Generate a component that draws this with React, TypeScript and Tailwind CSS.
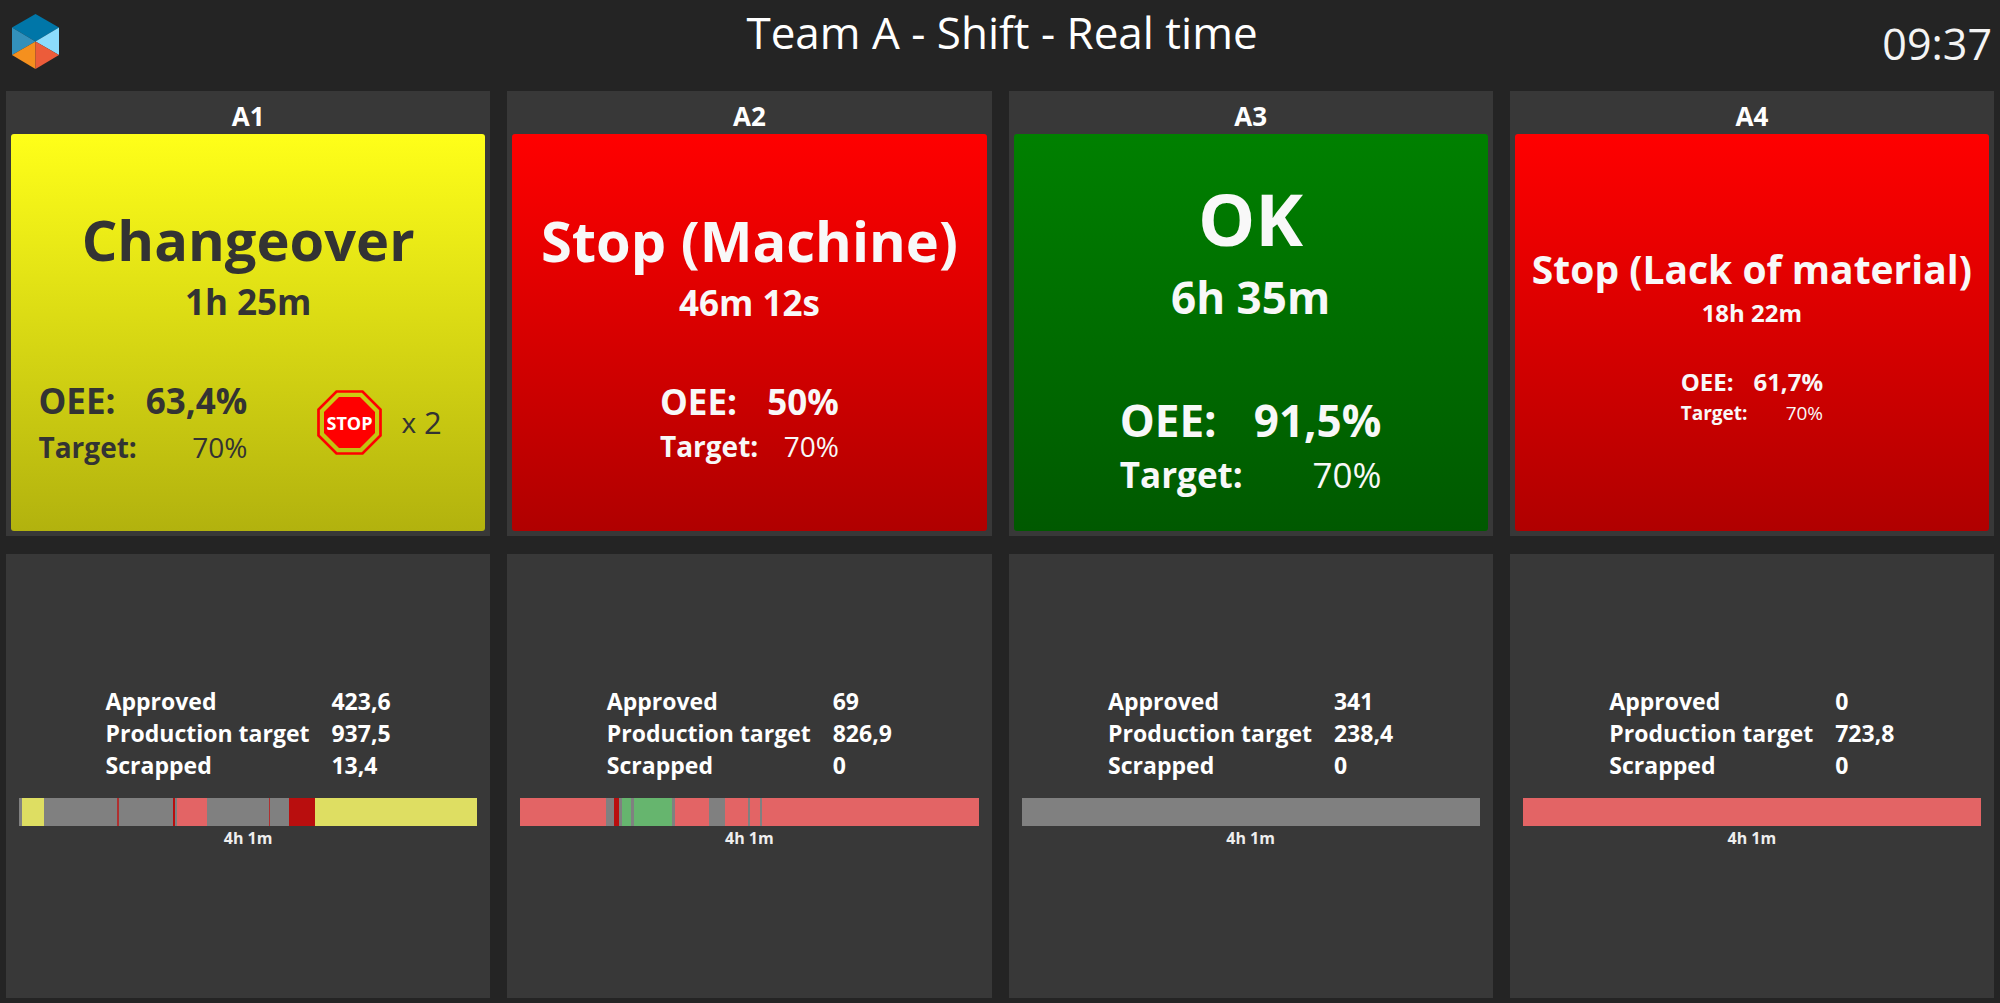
type TileSize = 'sm' | 'md' | 'lg';

type Segment = {
  kind: keyof typeof segmentColors;
  length: number;
};

type Machine = {
  name: string;
  status: string;
  duration: string;
  oee: string;
  target: string;
  stops?: number;
  size: TileSize;
  tileClassName: string;
  approved: string;
  productionTarget: string;
  scrapped: string;
  timeline: Segment[];
};

const segmentColors = {
  idle: 'bg-[#808080]',
  changeover: 'bg-[#dede62]',
  stop: 'bg-[#e36465]',
  shortStop: 'bg-[#b03030]',
  unknown: 'bg-[#b90e0e]',
  running: 'bg-[#66b56e]',
};

const sizeClasses = {
  sm: {
    status: 'text-[39px] leading-[54px]',
    duration: 'text-[24px] leading-[34px] mb-[35px]',
    grid: 'gap-x-[6px]',
    oee: 'text-[24px] leading-[34px]',
    target: 'text-[19px] leading-[28px]',
  },
  md: {
    status: 'text-[56px] leading-[76px]',
    duration: 'text-[35px] leading-[50px] mb-[50px]',
    grid: 'gap-x-[9px]',
    oee: 'text-[35px] leading-[48px]',
    target: 'text-[28px] leading-[40px]',
  },
  lg: {
    status: 'text-[72px] leading-[98px]',
    duration: 'text-[44px] leading-[60px] mb-[62px]',
    grid: 'gap-x-[11px]',
    oee: 'text-[44px] leading-[62px]',
    target: 'text-[35px] leading-[48px]',
  },
};

const yellowTile = 'from-[#ffff19] to-[#b2b20e] text-[#333333]';
const redTile = 'from-[#ff0000] to-[#b00000] text-[#f8f8f8]';
const greenTile = 'from-[#008000] to-[#005900] text-[#f8f8f8]';

const machines: Machine[] = [
  {
    name: 'A1',
    status: 'Changeover',
    duration: '1h 25m',
    oee: '63,4%',
    target: '70%',
    stops: 2,
    size: 'md',
    tileClassName: yellowTile,
    approved: '423,6',
    productionTarget: '937,5',
    scrapped: '13,4',
    timeline: [
      { kind: 'idle', length: 10 },
      { kind: 'changeover', length: 66 },
      { kind: 'idle', length: 217 },
      { kind: 'shortStop', length: 6 },
      { kind: 'idle', length: 161 },
      { kind: 'unknown', length: 7 },
      { kind: 'idle', length: 7 },
      { kind: 'stop', length: 88 },
      { kind: 'idle', length: 185 },
      { kind: 'shortStop', length: 4 },
      { kind: 'idle', length: 58 },
      { kind: 'unknown', length: 78 },
      { kind: 'changeover', length: 485 },
    ],
  },
  {
    name: 'A2',
    status: 'Stop (Machine)',
    duration: '46m 12s',
    oee: '50%',
    target: '70%',
    size: 'md',
    tileClassName: redTile,
    approved: '69',
    productionTarget: '826,9',
    scrapped: '0',
    timeline: [
      { kind: 'stop', length: 255 },
      { kind: 'idle', length: 26 },
      { kind: 'unknown', length: 13 },
      { kind: 'idle', length: 9 },
      { kind: 'running', length: 27 },
      { kind: 'idle', length: 9 },
      { kind: 'running', length: 114 },
      { kind: 'idle', length: 10 },
      { kind: 'stop', length: 102 },
      { kind: 'idle', length: 48 },
      { kind: 'stop', length: 68 },
      { kind: 'idle', length: 6 },
      { kind: 'stop', length: 30 },
      { kind: 'idle', length: 5 },
      { kind: 'stop', length: 648 },
    ],
  },
  {
    name: 'A3',
    status: 'OK',
    duration: '6h 35m',
    oee: '91,5%',
    target: '70%',
    size: 'lg',
    tileClassName: greenTile,
    approved: '341',
    productionTarget: '238,4',
    scrapped: '0',
    timeline: [{ kind: 'idle', length: 1 }],
  },
  {
    name: 'A4',
    status: 'Stop (Lack of material)',
    duration: '18h 22m',
    oee: '61,7%',
    target: '70%',
    size: 'sm',
    tileClassName: redTile,
    approved: '0',
    productionTarget: '723,8',
    scrapped: '0',
    timeline: [{ kind: 'stop', length: 1 }],
  },
];

const Logo = () => (
  <svg className="w-[47px] h-[55px]" viewBox="0 0 47 55" aria-hidden="true">
    <polygon points="23.5,0 47,13.5 23.5,27.5 0,13.5" fill="#0076a8" />
    <polygon points="0,13.5 23.5,27.5 0,41" fill="#3390bb" />
    <polygon points="47,13.5 47,41 23.5,27.5" fill="#8cdcfc" />
    <polygon points="0,41 23.5,27.5 23.5,55" fill="#f5901e" />
    <polygon points="47,41 23.5,27.5 23.5,55" fill="#ec5c3a" />
  </svg>
);

const StopSign = () => (
  <svg className="w-[65px] h-[65px]" viewBox="0 0 65 65">
    <polygon
      points="19.5,1.5 45.5,1.5 63.5,19.5 63.5,45.5 45.5,63.5 19.5,63.5 1.5,45.5 1.5,19.5"
      fill="none"
      stroke="#ff0000"
      strokeWidth="2.7"
    />
    <polygon
      points="22,7 43,7 58,22 58,43 43,58 22,58 7,43 7,22"
      fill="#ff0000"
    />
    <text
      x="32.5"
      y="40"
      textAnchor="middle"
      fill="#ffffff"
      fontSize="18"
      fontWeight="700"
    >
      STOP
    </text>
  </svg>
);

const StatusPanel = ({ machine }: { machine: Machine }) => {
  const size = sizeClasses[machine.size];

  return (
    <section className="flex flex-col min-w-0 bg-[#383838] pt-[7px] pl-[5px] pr-[5px] pb-[5px]">
      <h2 className="text-center text-[26px] leading-9 font-bold text-white">
        {machine.name}
      </h2>
      <div
        className={`flex flex-1 flex-col items-center justify-center rounded-[3px] bg-linear-to-b/srgb pt-1 whitespace-nowrap font-bold ${machine.tileClassName}`}
      >
        <p className={size.status}>{machine.status}</p>
        <p className={size.duration}>{machine.duration}</p>
        <div
          className={`flex items-center justify-center ${machine.stops ? 'gap-[70px] pr-4' : ''}`}
        >
          <dl
            className={`grid grid-cols-[auto_auto] ${size.grid} ${machine.stops ? 'gap-y-[2px]' : ''}`}
          >
            <dt className={size.oee}>OEE:</dt>
            <dd className={`text-right ${size.oee}`}>{machine.oee}</dd>
            <dt className={size.target}>Target:</dt>
            <dd className={`text-right font-normal ${size.target}`}>
              {machine.target}
            </dd>
          </dl>
          {machine.stops && (
            <div className="flex items-center font-normal">
              <StopSign />
              <span className="ml-[19px] text-[28px]">x</span>
              <span className="ml-2 text-[31px]">{machine.stops}</span>
            </div>
          )}
        </div>
      </div>
    </section>
  );
};

const ProductionPanel = ({ machine }: { machine: Machine }) => {
  const rows = [
    { label: 'Approved', value: machine.approved },
    { label: 'Production target', value: machine.productionTarget },
    { label: 'Scrapped', value: machine.scrapped },
  ];

  return (
    <section className="flex flex-col justify-center min-w-0 bg-[#383838] px-[13px] pb-4">
      <table className="self-center text-left text-[23px] leading-8 font-bold text-white">
        <tbody>
          {rows.map((row) => (
            <tr key={row.label}>
              <th scope="row" className="p-0 pr-[22px]">
                {row.label}
              </th>
              <td className="p-0">{row.value}</td>
            </tr>
          ))}
        </tbody>
      </table>
      <div className="mt-[17px] flex h-7">
        {machine.timeline.map((segment, i) => (
          <div
            key={i}
            className={segmentColors[segment.kind]}
            style={{ flexGrow: segment.length }}
          />
        ))}
      </div>
      <p className="text-center text-[16px] leading-6 font-bold text-[#eeeeee]">
        4h 1m
      </p>
    </section>
  );
};

const App = () => {
  return (
    <div className="flex min-h-screen flex-col bg-[#242424] font-['Open_Sans','Noto_Sans',sans-serif]">
      <header className="grid h-[91px] grid-cols-[1fr_auto_1fr] items-start pl-3 pr-2">
        <div className="pt-[14px]">
          <Logo />
        </div>
        <h1 className="text-[44px] leading-[64px] text-white">
          Team A - Shift - Real time
        </h1>
        <time className="pt-3 text-right text-[43px] leading-[64px] text-[#f4f4f4]">
          09:37
        </time>
      </header>
      <main className="grid flex-1 grid-cols-4 grid-rows-2 gap-x-[17px] gap-y-[18px] px-1.5 pb-[5px]">
        {machines.map((machine) => (
          <StatusPanel key={machine.name} machine={machine} />
        ))}
        {machines.map((machine) => (
          <ProductionPanel key={machine.name} machine={machine} />
        ))}
      </main>
    </div>
  );
};

export default App;
